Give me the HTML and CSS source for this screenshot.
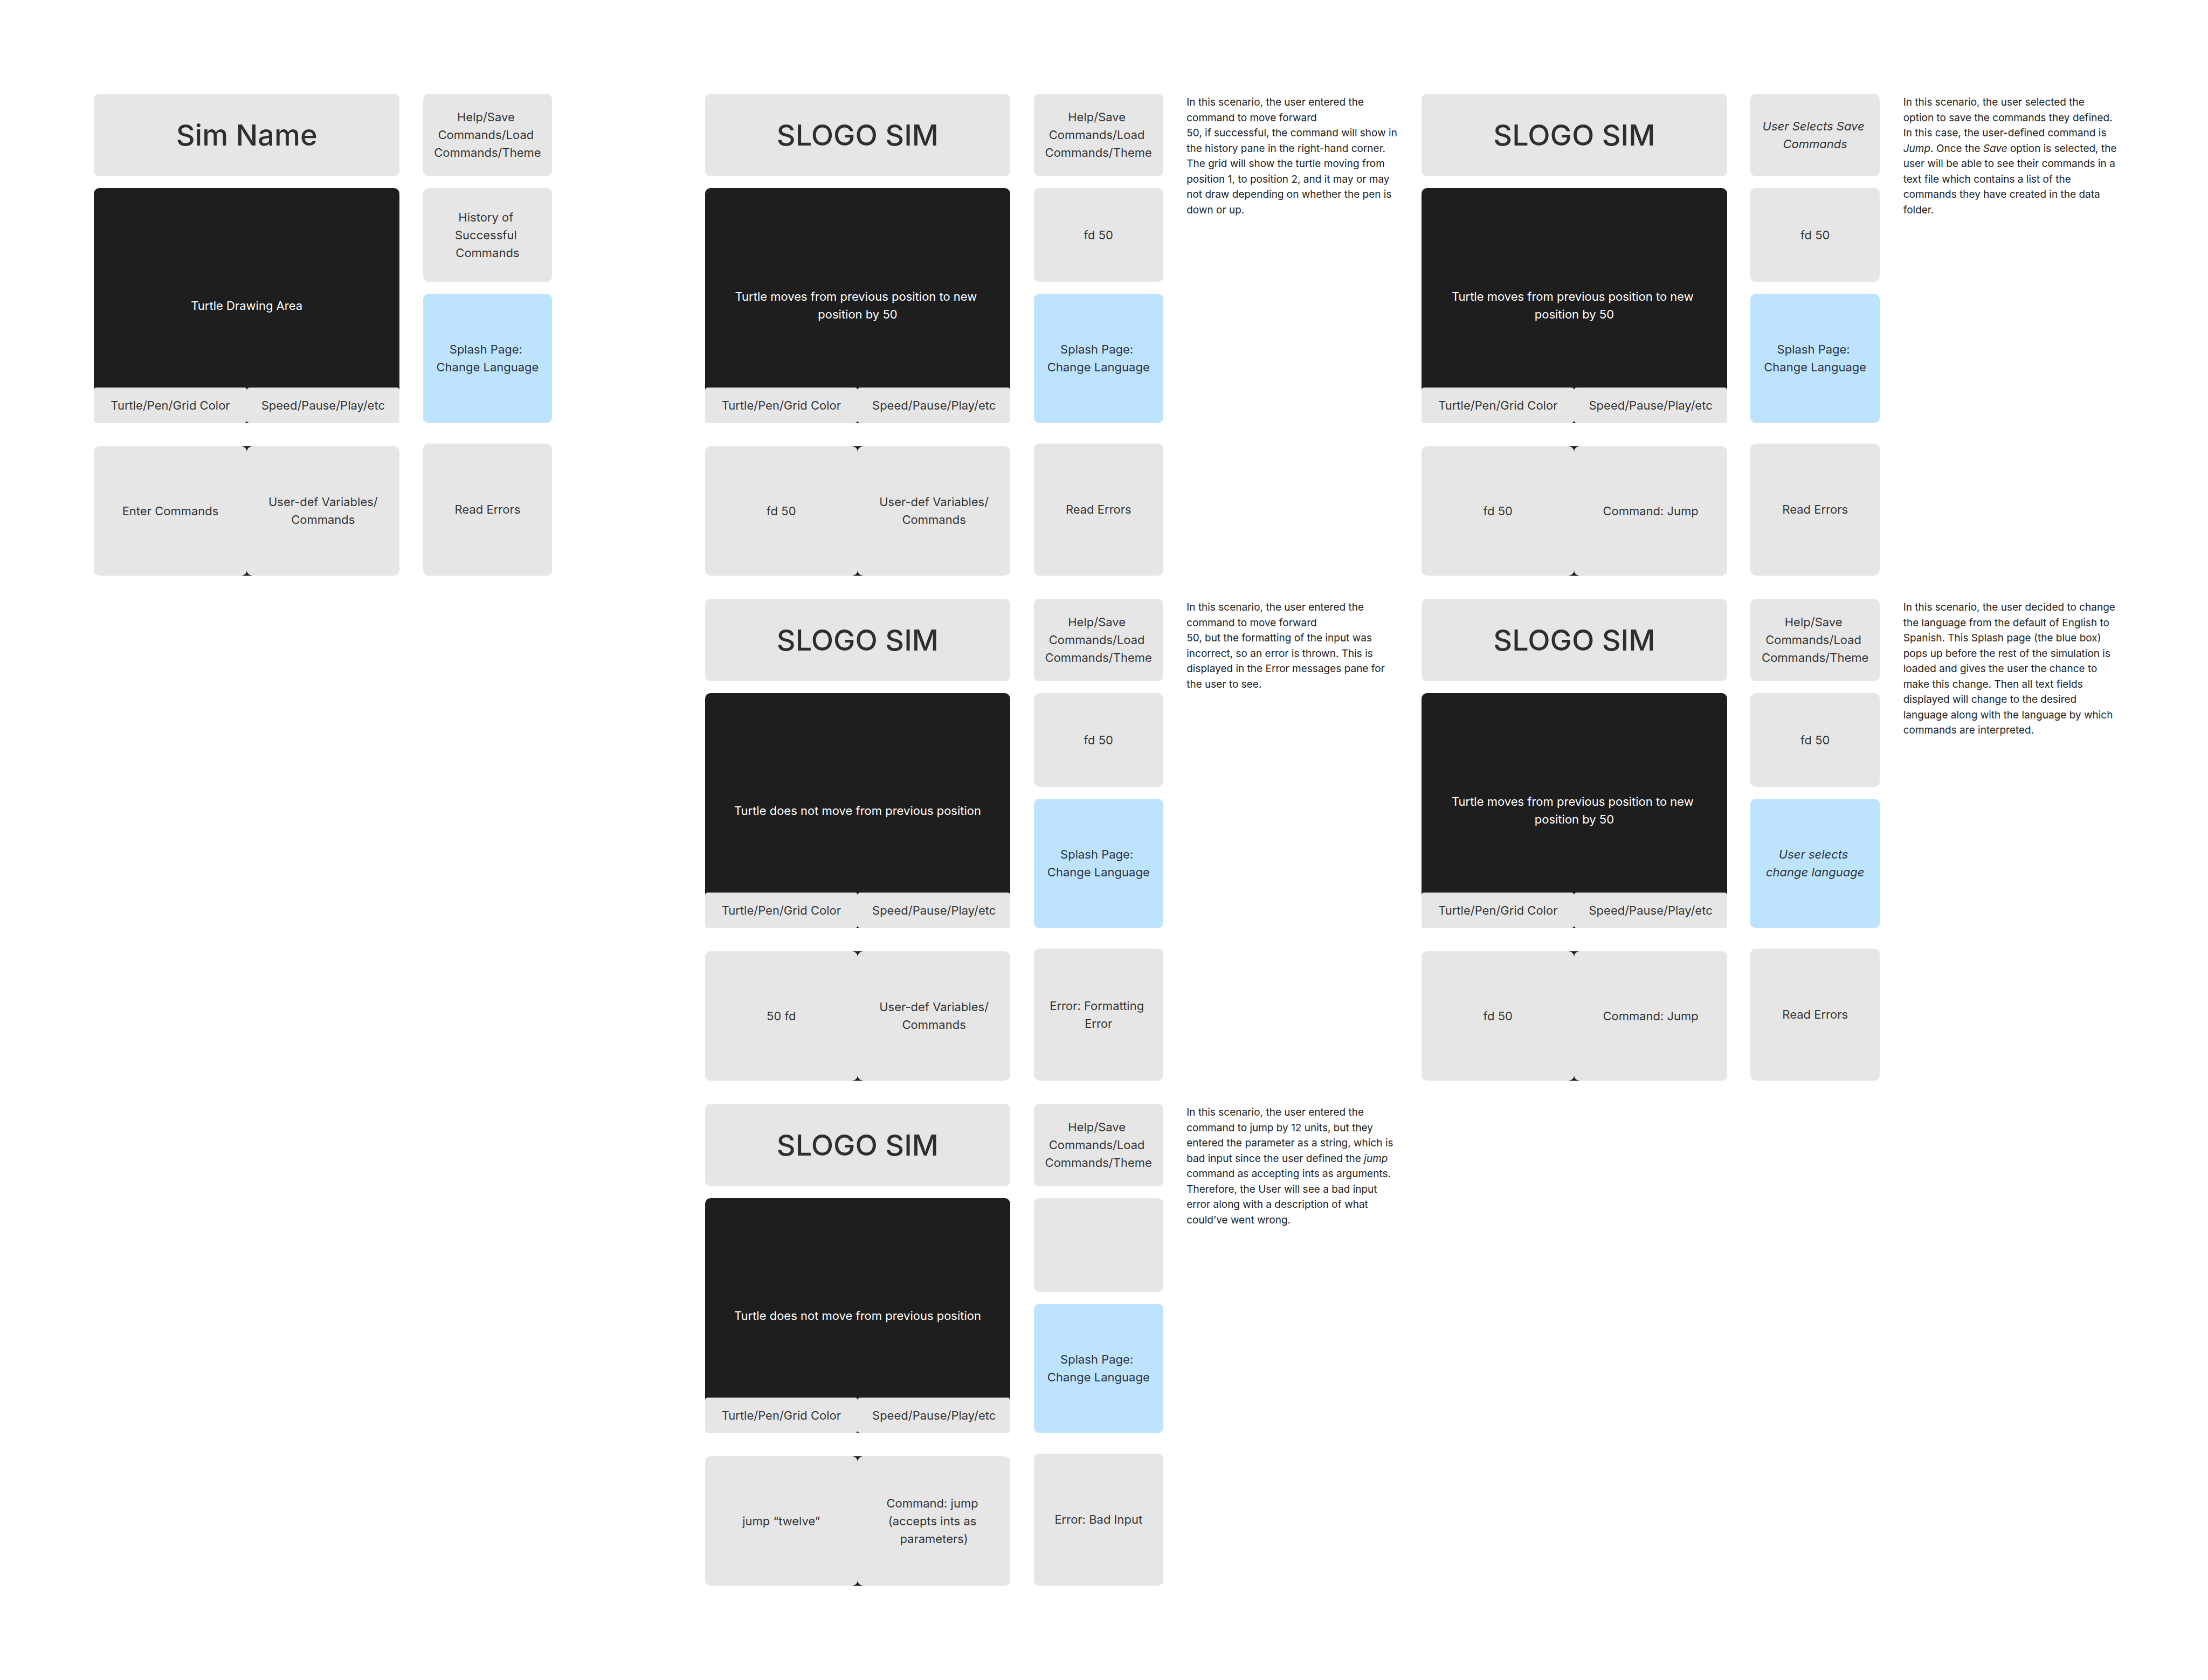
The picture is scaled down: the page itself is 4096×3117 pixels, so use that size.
FILE: index.html
```html
<!DOCTYPE html>
<html lang="en">
<head>
<meta charset="utf-8">
<title>SLOGO SIM wireframes</title>
<link rel="stylesheet" href="styles.css">
</head>
<body>
<main class="page">
  <section class="column column-base">
    <article class="board">
      <div class="stage">
        <h1 class="cell title">Sim Name</h1>
        <div class="canvas">
          <p class="canvas-text">Turtle Drawing Area</p>
          <div class="toolbar">
            <p class="cell tool">Turtle/Pen/Grid Color</p>
            <p class="cell tool">Speed/Pause/Play/etc</p>
          </div>
        </div>
        <div class="console">
          <p class="cell">Enter Commands</p>
          <p class="cell">User-def Variables/<br>Commands</p>
        </div>
      </div>
      <aside class="side">
        <p class="cell menu">Help/Save <br>Commands/Load <br>Commands/Theme</p>
        <p class="cell history">History of <br>Successful <br>Commands</p>
        <p class="cell splash">Splash Page: <br>Change Language</p>
        <p class="cell errors">Read Errors</p>
      </aside>
    </article>
  </section>

  <section class="column column-commands">
    <div class="scenario">
      <article class="board">
        <div class="stage">
          <h2 class="cell title">SLOGO SIM</h2>
          <div class="canvas">
            <p class="canvas-text">Turtle moves from previous position to new <br>position by 50</p>
            <div class="toolbar">
              <p class="cell tool">Turtle/Pen/Grid Color</p>
              <p class="cell tool">Speed/Pause/Play/etc</p>
            </div>
          </div>
          <div class="console">
            <p class="cell">fd 50</p>
            <p class="cell">User-def Variables/<br>Commands</p>
          </div>
        </div>
        <aside class="side">
          <p class="cell menu">Help/Save <br>Commands/Load <br>Commands/Theme</p>
          <p class="cell history">fd 50</p>
          <p class="cell splash">Splash Page: <br>Change Language</p>
          <p class="cell errors">Read Errors</p>
        </aside>
      </article>
      <p class="note">In this scenario, the user entered the<br>command to move forward<br>50, if successful, the command will show in<br>the history pane in the right-hand corner.<br>The grid will show the turtle moving from<br>position 1, to position 2, and it may or may<br>not draw depending on whether the pen is<br>down or up.</p>
    </div>

    <div class="scenario">
      <article class="board">
        <div class="stage">
          <h2 class="cell title">SLOGO SIM</h2>
          <div class="canvas">
            <p class="canvas-text">Turtle does not move from previous position</p>
            <div class="toolbar">
              <p class="cell tool">Turtle/Pen/Grid Color</p>
              <p class="cell tool">Speed/Pause/Play/etc</p>
            </div>
          </div>
          <div class="console">
            <p class="cell">50 fd</p>
            <p class="cell">User-def Variables/<br>Commands</p>
          </div>
        </div>
        <aside class="side">
          <p class="cell menu">Help/Save <br>Commands/Load <br>Commands/Theme</p>
          <p class="cell history">fd 50</p>
          <p class="cell splash">Splash Page: <br>Change Language</p>
          <p class="cell errors">Error: Formatting <br>Error</p>
        </aside>
      </article>
      <p class="note">In this scenario, the user entered the<br>command to move forward<br>50, but the formatting of the input was<br>incorrect, so an error is thrown. This is<br>displayed in the Error messages pane for<br>the user to see.</p>
    </div>

    <div class="scenario">
      <article class="board">
        <div class="stage">
          <h2 class="cell title">SLOGO SIM</h2>
          <div class="canvas">
            <p class="canvas-text">Turtle does not move from previous position</p>
            <div class="toolbar">
              <p class="cell tool">Turtle/Pen/Grid Color</p>
              <p class="cell tool">Speed/Pause/Play/etc</p>
            </div>
          </div>
          <div class="console">
            <p class="cell">jump “twelve”</p>
            <p class="cell">Command: jump <br>(accepts ints as <br>parameters)</p>
          </div>
        </div>
        <aside class="side">
          <p class="cell menu">Help/Save <br>Commands/Load <br>Commands/Theme</p>
          <p class="cell history"></p>
          <p class="cell splash">Splash Page: <br>Change Language</p>
          <p class="cell errors">Error: Bad Input</p>
        </aside>
      </article>
      <p class="note">In this scenario, the user entered the<br>command to jump by 12 units, but they<br>entered the parameter as a string, which is<br>bad input since the user defined the <em>jump</em><br>command as accepting ints as arguments.<br>Therefore, the User will see a bad input<br>error along with a description of what<br>could’ve went wrong.</p>
    </div>
  </section>

  <section class="column column-options">
    <div class="scenario">
      <article class="board">
        <div class="stage">
          <h2 class="cell title">SLOGO SIM</h2>
          <div class="canvas">
            <p class="canvas-text">Turtle moves from previous position to new <br>position by 50</p>
            <div class="toolbar">
              <p class="cell tool">Turtle/Pen/Grid Color</p>
              <p class="cell tool">Speed/Pause/Play/etc</p>
            </div>
          </div>
          <div class="console">
            <p class="cell">fd 50</p>
            <p class="cell">Command: Jump</p>
          </div>
        </div>
        <aside class="side">
          <p class="cell menu"><em>User Selects Save <br>Commands</em></p>
          <p class="cell history">fd 50</p>
          <p class="cell splash">Splash Page: <br>Change Language</p>
          <p class="cell errors">Read Errors</p>
        </aside>
      </article>
      <p class="note">In this scenario, the user selected the<br>option to save the commands they defined.<br>In this case, the user-defined command is<br><em>Jump</em>. Once the <em>Save</em> option is selected, the<br>user will be able to see their commands in a<br>text file which contains a list of the<br>commands they have created in the data<br>folder.</p>
    </div>

    <div class="scenario">
      <article class="board">
        <div class="stage">
          <h2 class="cell title">SLOGO SIM</h2>
          <div class="canvas">
            <p class="canvas-text">Turtle moves from previous position to new <br>position by 50</p>
            <div class="toolbar">
              <p class="cell tool">Turtle/Pen/Grid Color</p>
              <p class="cell tool">Speed/Pause/Play/etc</p>
            </div>
          </div>
          <div class="console">
            <p class="cell">fd 50</p>
            <p class="cell">Command: Jump</p>
          </div>
        </div>
        <aside class="side">
          <p class="cell menu">Help/Save <br>Commands/Load <br>Commands/Theme</p>
          <p class="cell history">fd 50</p>
          <p class="cell splash"><em>User selects <br>change language</em></p>
          <p class="cell errors">Read Errors</p>
        </aside>
      </article>
      <p class="note">In this scenario, the user decided to change<br>the language from the default of English to<br>Spanish. This Splash page (the blue box)<br>pops up before the rest of the simulation is<br>loaded and gives the user the chance to<br>make this change. Then all text fields<br>displayed will change to the desired<br>language along with the language by which<br>commands are interpreted.</p>
    </div>
  </section>
</main>
</body>
</html>
```
FILE: styles.css
```css
:root {
  --ink: #1e1e1e;
  --label: rgba(0, 0, 0, 0.8);
  --grey: #e6e6e6;
  --blue: #bde3ff;
}

* {
  box-sizing: border-box;
  margin: 0;
}

body {
  background: #fff;
  color: var(--ink);
  font: 400 22px/1.5 Inter, "Liberation Sans", sans-serif;
}

/* margin, base, space, commands, space, options, margin */
.page {
  display: grid;
  grid-template-columns:
    minmax(0, 256fr) minmax(0, 1248fr) minmax(0, 416fr)
    minmax(0, 1888fr) minmax(0, 64fr) minmax(0, 1888fr) minmax(0, 254fr);
  padding: 174px 0;
}

.column {
  display: flex;
  flex-direction: column;
  gap: 43px;
}

.column-base { grid-column: 2; }
.column-commands { grid-column: 4; }
.column-options { grid-column: 6; }

.scenario {
  display: grid;
  grid-template-columns: minmax(0, 1248fr) minmax(0, 64fr) minmax(0, 576fr);
}

.board {
  display: grid;
  grid-template-columns: minmax(0, 832fr) minmax(0, 64fr) minmax(0, 352fr);
}

.stage,
.side {
  display: flex;
  flex-direction: column;
}

.side {
  grid-column: 3;
}

.cell {
  display: grid;
  place-content: center;
  border-radius: 10px;
  background: var(--grey);
  color: var(--label);
  text-align: center;
  /* the space before a line break counts towards the centring */
  white-space: break-spaces;
}

.title {
  height: 153px;
  font-size: 54px;
  font-weight: 500;
}

.canvas {
  display: grid;
  height: 436px;
  margin-top: 22px;
  border-radius: 10px;
  background: var(--ink);
}

.canvas-text,
.toolbar {
  grid-area: 1 / 1;
}

.canvas-text {
  align-self: center;
  color: #fff;
  text-align: center;
  white-space: break-spaces;
}

.toolbar {
  display: grid;
  grid-template-columns: 1fr 1fr;
  align-self: end;
  height: 66px;
}

.tool {
  border-radius: 5px;
}

.console {
  display: grid;
  grid-template-columns: 1fr 1fr;
  height: 240px;
  margin-top: 43px;
  background: linear-gradient(var(--ink), var(--ink)) center / 30px 100% no-repeat;
}

.menu {
  height: 153px;
}

.history {
  height: 174px;
  margin-top: 22px;
}

.splash {
  height: 240px;
  margin-top: 22px;
  background: var(--blue);
}

.errors {
  height: 245px;
  margin-top: 38px;
}

.note {
  grid-column: 3;
  padding-top: 2px;
  font-size: 19px;
  white-space: nowrap;
}
```
